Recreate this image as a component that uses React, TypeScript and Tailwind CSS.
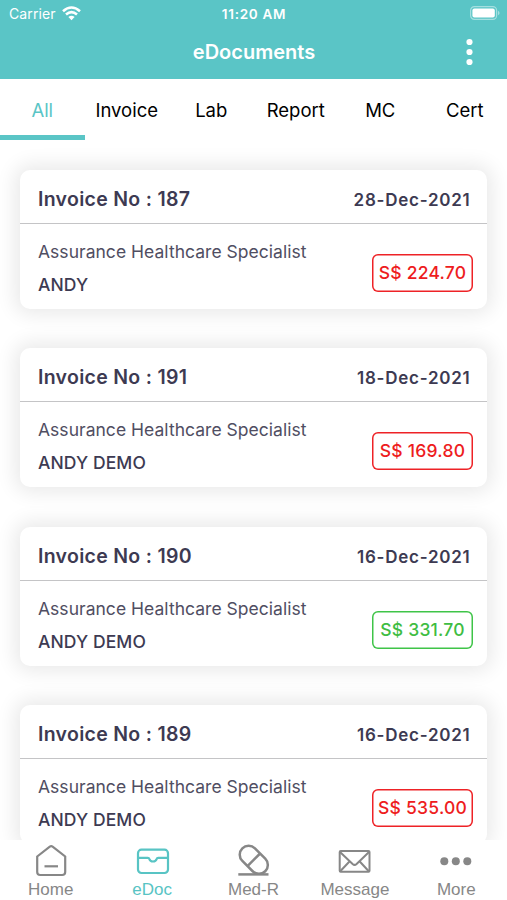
import type { ReactNode } from "react";

const tabs = ["All", "Invoice", "Lab", "Report", "MC", "Cert"];

const documents = [
  { no: 187, date: "28-Dec-2021", name: "ANDY", amount: "224.70", paid: false },
  { no: 191, date: "18-Dec-2021", name: "ANDY DEMO", amount: "169.80", paid: false },
  { no: 190, date: "16-Dec-2021", name: "ANDY DEMO", amount: "331.70", paid: true },
  { no: 189, date: "16-Dec-2021", name: "ANDY DEMO", amount: "535.00", paid: false },
];

const navItems: { label: string; icon: ReactNode }[] = [
  {
    label: "Home",
    icon: (
      <>
        <path d="M4.2 12.5 L16.8 2.7 Q18.2 1.7 19.6 2.7 L32.2 12.5 V28 Q32.2 31 29.2 31 H7.2 Q4.2 31 4.2 28 Z" />
        <path d="M11.5 22.3 H25" />
      </>
    ),
  },
  {
    label: "eDoc",
    icon: (
      <>
        <rect x="3" y="5.7" width="30" height="23.3" rx="3.5" />
        <path d="M3 13.8 H12.8 Q14 13.8 14.3 14.9 Q15.2 17.5 18 17.5 Q20.8 17.5 21.7 14.9 Q22 13.8 23.2 13.8 H33" />
      </>
    ),
  },
  {
    label: "Med-R",
    icon: (
      <g strokeWidth="2.5">
        <g transform="rotate(45 17.8 15.8)">
          <rect x="1.6" y="6.9" width="32.4" height="17.8" rx="8.9" />
          <path d="M17.8 6.9 V24.7" />
        </g>
        <path d="M2.3 30.4 H32.5" />
      </g>
    ),
  },
  {
    label: "Message",
    icon: (
      <g strokeWidth="2">
        <rect x="2.7" y="7" width="29.8" height="20.8" rx="1" />
        <path d="M3 8 L15.6 20 Q17.6 21.8 19.6 20 L32 8 M3 27.5 L12.7 17.2 M32 27.5 L22.5 17.2" />
      </g>
    ),
  },
  {
    label: "More",
    icon: (
      <g fill="currentColor" stroke="none">
        <circle cx="5.3" cy="17.2" r="4" />
        <circle cx="16.8" cy="17.2" r="4" />
        <circle cx="28.3" cy="17.2" r="4" />
      </g>
    ),
  },
];

function Header() {
  return (
    <header className="h-[79px] shrink-0 bg-[#5ac5c6] text-white">
      <div className="grid h-7 grid-cols-3 items-center pl-[9px] pr-[7px]">
        <div className="flex items-center gap-[6px] pb-[2px]">
          <span className="text-[14px] tracking-[0.1px]">Carrier</span>
          <svg width="19" height="15" viewBox="0 0 19 15" fill="none" stroke="currentColor" strokeWidth="2.6">
            <path d="M1 5.2 Q9.5 -2.2 18 5.2" />
            <path d="M4 8.6 Q9.5 3.8 15 8.6" />
            <path d="M6.4 11 Q9.5 8.4 12.6 11 L9.5 14.3 Z" fill="currentColor" stroke="none" />
          </svg>
        </div>
        <span className="pr-px text-center text-[13.5px] font-semibold tracking-[0.7px]">11:20 AM</span>
        <svg className="-mt-[2px] justify-self-end" width="30" height="14" viewBox="0 0 30 14">
          <rect x="0.6" y="0.6" width="26" height="12.8" rx="3.8" fill="none" stroke="#a5dfe0" strokeWidth="1.2" />
          <rect x="2.4" y="2.4" width="22.4" height="9.2" rx="2" fill="white" />
          <path d="M28 4.7 Q29.6 5.4 29.6 7 Q29.6 8.6 28 9.3 Z" fill="#a5dfe0" />
        </svg>
      </div>
      <div className="grid h-12 grid-cols-[1fr_auto_1fr] items-center pr-[34px] pl-[34px]">
        <h1 className="col-start-2 pl-px text-[20px] font-semibold">eDocuments</h1>
        <svg className="justify-self-end" width="7" height="28" viewBox="0 0 7 28" fill="white">
          <circle cx="3.5" cy="4" r="3.1" />
          <circle cx="3.5" cy="14" r="3.1" />
          <circle cx="3.5" cy="24" r="3.1" />
        </svg>
      </div>
    </header>
  );
}

function DocumentCard({ doc }: { doc: (typeof documents)[number] }) {
  return (
    <article className="h-[139px] shrink-0 rounded-[10px] bg-white text-[#3d3a52] shadow-[0_0_20px_5px_rgba(0,0,0,0.09)]">
      <div className="flex h-[54px] items-center justify-between border-b border-[#c4c4c6] pt-[6px] pr-[17px] pl-[18px]">
        <h2 className="text-[19.5px] font-semibold tracking-[0.3px]">Invoice No : {doc.no}</h2>
        <time className="-mr-[0.5px] pt-[2px] text-[17px] font-semibold tracking-[0.75px]">{doc.date}</time>
      </div>
      <div className="flex justify-between pr-[15px] pl-[18px]">
        <div className="pt-[11px] text-[17.5px] leading-[33px]">
          <p className="tracking-[0.03px] text-[#504e62]">Assurance Healthcare Specialist</p>
          <p className="font-medium tracking-[0.1px]">{doc.name}</p>
        </div>
        <div
          className={`mt-[30px] -mr-px flex h-[38px] w-[101px] items-center justify-center rounded-[6px] text-[17.5px] font-medium tracking-[0.25px] whitespace-nowrap ${
            doc.paid
              ? "text-[#3fbd43] shadow-[inset_0_0_0_1.5px_#3fc448]"
              : "text-[#ee1c20] shadow-[inset_0_0_0_1.5px_#ee2226]"
          }`}
        >
          S$ {doc.amount}
        </div>
      </div>
    </article>
  );
}

export default function App() {
  return (
    <div className="flex h-[900px] w-[507px] flex-col overflow-hidden bg-white font-['Inter',sans-serif]">
      <Header />
      <nav className="grid h-[61px] shrink-0 grid-cols-6 text-center text-[18.5px] text-black">
        {tabs.map((tab, i) => (
          <button
            key={tab}
            className={`border-b-5 pt-[7px] ${
              i === 0 ? "border-[#5ac5c6] text-[#5ac5c6]" : "border-transparent"
            }`}
          >
            {tab}
          </button>
        ))}
      </nav>

      <main className="flex min-h-0 flex-1 flex-col gap-[39.4px] overflow-hidden px-5 pt-[30px]">
        {documents.map((doc) => (
          <DocumentCard key={doc.no} doc={doc} />
        ))}
      </main>

      <nav className="grid h-[60px] shrink-0 grid-cols-5 bg-white font-['Liberation_Sans',sans-serif] text-[#878787]">
        {navItems.map((item) => (
          <button
            key={item.label}
            className={`flex flex-col items-center pt-[4px] ${item.label === "eDoc" ? "text-[#58c4c4]" : ""}`}
          >
            <svg width="35" height="35" viewBox="0 0 35 35" fill="none" stroke="currentColor" strokeWidth="2.2">
              {item.icon}
            </svg>
            <span className="pt-px text-[17px] leading-[20px]">{item.label}</span>
          </button>
        ))}
      </nav>
    </div>
  );
}
